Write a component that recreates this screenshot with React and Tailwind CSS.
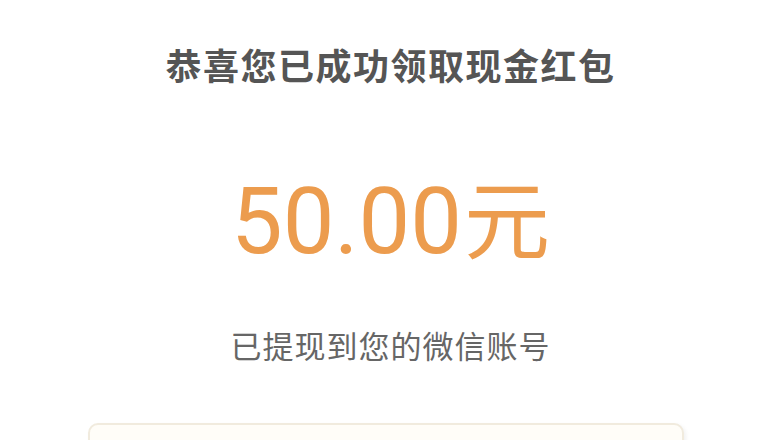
export default function App() {
  return (
    <div className="w-[781px] h-[440px] overflow-hidden bg-white flex flex-col items-center" style={{ fontFamily: '"Noto Sans CJK SC", "Noto Sans", sans-serif' }}>
      <div className="mt-[45px] text-[36px] leading-[38px] font-bold text-[#555555] tracking-[1.5px]">恭喜您已成功领取现金红包</div>
      <div className="mt-[90px] flex items-baseline text-[#ec9c4e] leading-none">
        <span className="text-[92px]" style={{ fontFamily: 'Roboto, "Noto Sans", sans-serif' }}>50.00</span>
        <span className="text-[86px] ml-[2px]">元</span>
      </div>
      <div className="mt-[60px] text-[31px] leading-[34px] text-[#666666] tracking-[1px]">已提现到您的微信账号</div>
      <div className="mt-[61px] self-start ml-[88px] w-[596px] h-[60px] shrink-0 rounded-[10px] border-2 border-[#f1ebde] bg-[#fffdf8] shadow-[2px_2px_4px_rgba(0,0,0,0.06)]"></div>
    </div>
  );
}
